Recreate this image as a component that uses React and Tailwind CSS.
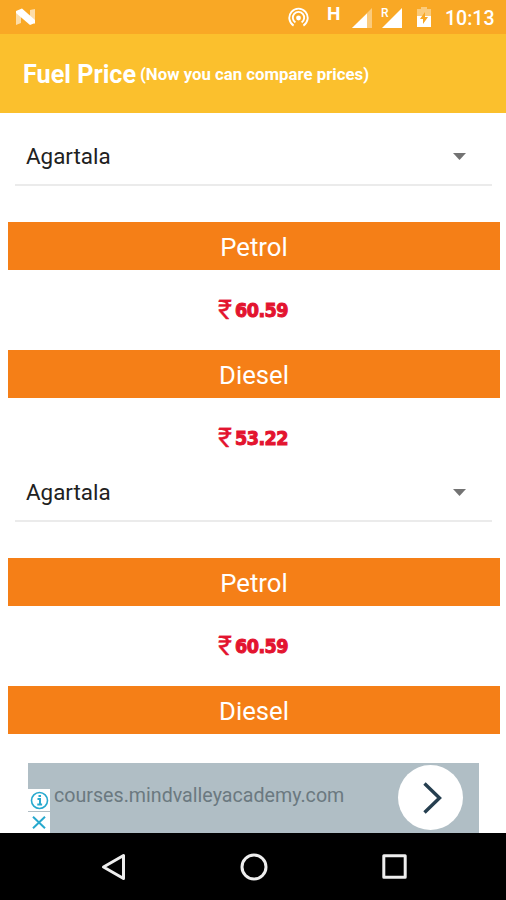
import { useState } from 'react'

const CITIES = [
  { name: 'Agartala', petrol: '60.59', diesel: '53.22' },
]

export default function App() {
  return (
    <div className="flex h-[900px] w-[506px] flex-col overflow-hidden bg-white font-['Roboto',sans-serif]">
      <StatusBar />
      <header className="flex h-[79px] shrink-0 items-center bg-[#fbc02d] pl-[23px] pt-[3px] text-white">
        <h1 className="flex items-center font-bold whitespace-nowrap">
          <span className="w-[117px] text-[25.2px]">Fuel Price</span>
          <span className="text-[16.8px]">(Now you can compare prices)</span>
        </h1>
      </header>
      <main className="min-h-0 flex-1 overflow-hidden">
        <CityPrices />
        <CityPrices collapsed />
      </main>
      <AdBanner />
      <NavBar />
    </div>
  )
}

function StatusBar() {
  return (
    <div className="flex h-[34px] shrink-0 items-center bg-[#f9a825] text-white">
      <svg className="ml-[15px] h-[18px] w-[22px]" viewBox="0 0 22 18">
        <path d="M1 3l5 3v9l-5 2zM15 2l5-1v15l-5-3z" fill="#fff" opacity=".6" />
        <path d="M1 3l6-2.5 13 11.5v3l-5 2L1 5z" fill="#fff" />
      </svg>
      {/* Hotspot */}
      <svg className="ml-[251px] h-[21px] w-[21px]" viewBox="0 0 21 21" fill="none" stroke="#fff" strokeWidth="1.9">
        <path d="M5.6 18.6a9.2 9.2 0 1 1 9.8 0" />
        <path d="M7.4 15.4a5.7 5.7 0 1 1 6.2 0" />
        <circle cx="10.5" cy="11" r="2.4" fill="#fff" stroke="none" />
      </svg>
      <span className="ml-[18px] mb-[8px] w-[15px] text-[19px] leading-none font-bold">H</span>
      {/* Signal, first sim */}
      <svg className="ml-[10px] h-[22px] w-[20px]" viewBox="0 0 20 22">
        <path d="M20 2v20H0z" fill="#fff" opacity=".4" />
        <path d="M15 7.5V22H0z" fill="#fff" />
      </svg>
      {/* Signal, roaming sim */}
      <div className="relative ml-[9px] h-[22px] w-[21px]">
        <svg className="h-[22px] w-[21px]" viewBox="0 0 21 22">
          <path d="M21 2v20H1z" fill="#fff" />
        </svg>
        <span className="absolute top-[1px] left-0 text-[12px] leading-none font-medium">R</span>
      </div>
      {/* Battery */}
      <svg className="ml-[15px] h-[20px] w-[14px]" viewBox="0 0 14 20">
        <path d="M4 0h6v2h4v8H0V2h4z" fill="#fff" opacity=".4" />
        <path d="M0 9h14v11H0z" fill="#fff" />
        <path d="M8 5v5h3l-5 7v-5H3z" fill="#f9a825" />
      </svg>
      <span className="ml-[14px] pt-[3px] text-[19.5px] leading-none font-medium">10:13</span>
    </div>
  )
}

function CityPrices({ collapsed }) {
  const [city] = useState(CITIES[0])

  return (
    <section className="flex h-[336px] flex-col pr-[6px] pl-[8px]">
      <button className="mr-[8px] ml-[7px] flex h-[73px] shrink-0 items-center justify-between border-b-2 border-[#ebebeb] pt-[16px] pr-[26px] pl-[11px] text-left text-[22.4px] text-[#212121]">
        <span>{city.name}</span>
        <svg className="h-[7px] w-[13px]" viewBox="0 0 13 7">
          <path d="M0 0h13L6.5 7z" fill="#737373" />
        </svg>
      </button>
      <FuelRow label="Petrol" price={city.petrol} first />
      <FuelRow label="Diesel" price={collapsed ? null : city.diesel} />
    </section>
  )
}

function FuelRow({ label, price, first }) {
  return (
    <div className={first ? 'mt-[35.5px] h-32 shrink-0' : 'h-32 shrink-0'}>
      <h2 className="flex h-12 items-center justify-center bg-[#f57f17] pt-[3px] text-[25.7px] text-white">{label}</h2>
      {price && (
        <p className="flex h-20 items-center justify-center gap-[3px] pt-[2px] pr-[2px] leading-none text-[#e3142f]">
          <span className="text-[27px] [-webkit-text-stroke:0.3px_#e3142f]">₹</span>
          <span className="font-['DejaVu_Sans_Condensed','DejaVu_Sans',sans-serif] text-[19.5px] font-bold tracking-[-0.5px] [-webkit-text-stroke:1px_#e3142f]">{price}</span>
        </p>
      )}
    </div>
  )
}

function AdBanner() {
  return (
    <div className="flex h-[99px] shrink-0 bg-white pt-[29px] pr-[27px] pl-[28px]">
      <div className="flex h-[70px] w-full bg-[#b0bec5]">
        <div className="mt-[26px] flex w-[22px] flex-col gap-px">
          <div className="flex h-[22px] items-center justify-center bg-white">
            <svg className="h-[19px] w-[19px]" viewBox="0 0 19 19" fill="none" stroke="#27a9ce">
              <circle cx="9.5" cy="9.5" r="8" strokeWidth="1.6" />
              <path d="M7.5 8h2.5v5.5M7.3 13.5h4.8M8.5 5h2.5" strokeWidth="2" />
            </svg>
          </div>
          <div className="flex h-[21px] items-center justify-center bg-white">
            <svg className="h-[13px] w-[14px]" viewBox="0 0 14 13" fill="none" stroke="#27a9ce" strokeWidth="2">
              <path d="M1 .8l12 11.4M13 .8L1 12.2" />
            </svg>
          </div>
        </div>
        <span className="ml-1 pt-[18px] text-[19.65px] text-[#6b7980]">courses.mindvalleyacademy.com</span>
        <div className="mt-[2px] mr-4 ml-auto flex h-[65px] w-[65px] items-center justify-center rounded-full bg-white">
          <svg className="ml-[4px] h-[32px] w-[19px]" viewBox="0 0 19 32" fill="none" stroke="#263f50" strokeWidth="3.4">
            <path d="M1.5 1.5L16.5 16l-15 14.5" />
          </svg>
        </div>
      </div>
    </div>
  )
}

function NavBar() {
  return (
    <nav className="flex h-[67px] shrink-0 items-center bg-black">
      <svg className="ml-[101px] h-[28px] w-[25px]" viewBox="0 0 25 28" fill="none" stroke="#eee" strokeWidth="3" strokeLinejoin="round">
        <path d="M22.5 2.5v23L2.5 14z" />
      </svg>
      <svg className="ml-[114px] h-[28px] w-[28px]" viewBox="0 0 28 28" fill="none" stroke="#eee" strokeWidth="3">
        <circle cx="14" cy="14" r="12" />
      </svg>
      <svg className="ml-[114px] h-[25px] w-[25px]" viewBox="0 0 25 25" fill="none" stroke="#eee" strokeWidth="3" strokeLinejoin="round">
        <rect x="1.8" y="1.8" width="21.4" height="21.4" />
      </svg>
    </nav>
  )
}
